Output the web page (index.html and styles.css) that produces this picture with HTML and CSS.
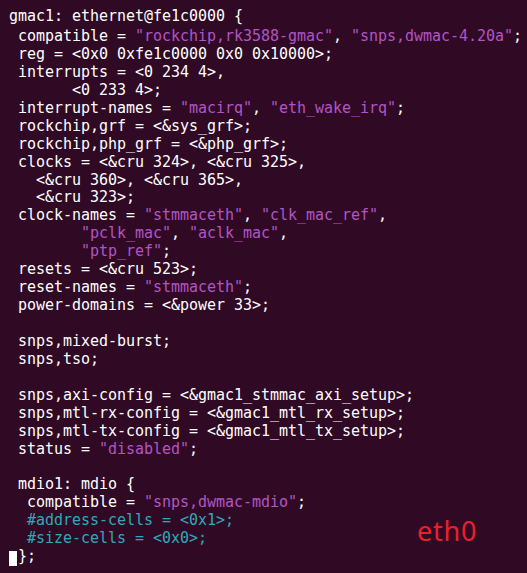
FILE: index.html
```html
<!DOCTYPE html>
<html>
<head>
<meta charset="utf-8">
<link rel="stylesheet" href="styles.css">
</head>
<body>
<div class="term">
<pre class="code head">gmac1: ethernet@fe1c0000 {</pre>
<pre class="code body"> compatible = <span class="s">"rockchip,rk3588-gmac"</span>, <span class="s">"snps,dwmac-4.20a"</span>;
 reg = &lt;0x0 0xfe1c0000 0x0 0x10000&gt;;
 interrupts = &lt;0 234 4&gt;,
       &lt;0 233 4&gt;;
 interrupt-names = <span class="s">"macirq"</span>, <span class="s">"eth_wake_irq"</span>;
 rockchip,grf = &lt;&amp;sys_grf&gt;;
 rockchip,php_grf = &lt;&amp;php_grf&gt;;
 clocks = &lt;&amp;cru 324&gt;, &lt;&amp;cru 325&gt;,
   &lt;&amp;cru 360&gt;, &lt;&amp;cru 365&gt;,
   &lt;&amp;cru 323&gt;;
 clock-names = <span class="s">"stmmaceth"</span>, <span class="s">"clk_mac_ref"</span>,
        <span class="s">"pclk_mac"</span>, <span class="s">"aclk_mac"</span>,
        <span class="s">"ptp_ref"</span>;
 resets = &lt;&amp;cru 523&gt;;
 reset-names = <span class="s">"stmmaceth"</span>;
 power-domains = &lt;&amp;power 33&gt;;

 snps,mixed-burst;
 snps,tso;

 snps,axi-config = &lt;&amp;gmac1_stmmac_axi_setup&gt;;
 snps,mtl-rx-config = &lt;&amp;gmac1_mtl_rx_setup&gt;;
 snps,mtl-tx-config = &lt;&amp;gmac1_mtl_tx_setup&gt;;
 status = <span class="s">"disabled"</span>;

 mdio1: mdio {
  compatible = <span class="s">"snps,dwmac-mdio"</span>;
  <span class="c">#address-cells = &lt;0x1&gt;;</span>
  <span class="c">#size-cells = &lt;0x0&gt;;</span>
<span class="cursor"> </span>};</pre>
<div class="note">eth0</div>
</div>
</body>
</html>
```

FILE: styles.css
```css
html, body {
  margin: 0;
  padding: 0;
  background: #300a24;
  width: 527px;
  height: 573px;
  overflow: hidden;
}

.term {
  position: relative;
  width: 527px;
  height: 573px;
  box-sizing: border-box;
  padding: 7px 0 0 9px;
}

.code {
  margin: 0;
  font-family: "DejaVu Sans Mono", "Liberation Mono", monospace;
  font-size: 15px;
  letter-spacing: -0.03px;
  line-height: 18px;
  color: #ffffff;
  white-space: pre;
}

.head {
  margin-bottom: 3px;
}

.body {
  line-height: 17.93px;
}

.s {
  color: #b255c4;
}

.c {
  color: #2fa8ba;
}

.cursor {
  display: inline-block;
  width: 8px;
  height: 15px;
  margin-right: 1px;
  background: #ffffff;
  vertical-align: -3px;
}

.note {
  position: absolute;
  left: 417px;
  top: 517px;
  font-family: "Noto Sans", "Open Sans", sans-serif;
  font-size: 27px;
  line-height: 27px;
  letter-spacing: 0.8px;
  color: #e8202a;
}
```
